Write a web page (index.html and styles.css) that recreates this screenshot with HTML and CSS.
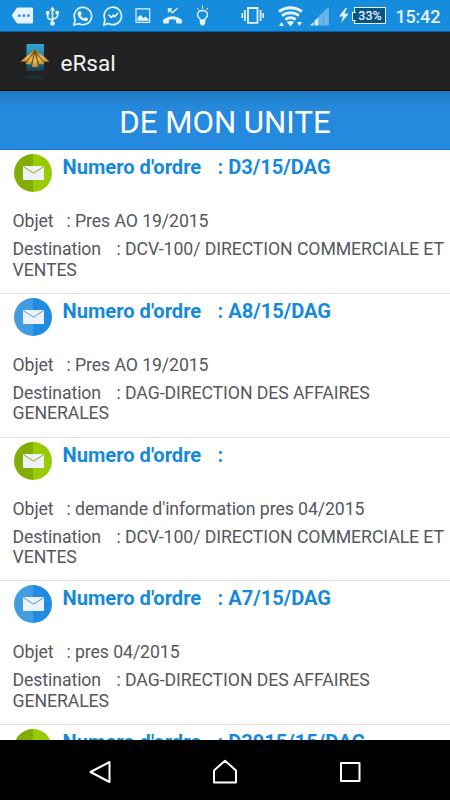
FILE: index.html
```html
<!DOCTYPE html>
<html lang="fr">
<head>
<meta charset="utf-8">
<title>eRsal</title>
<link rel="stylesheet" href="styles.css">
</head>
<body>
<svg class="defs" width="0" height="0">
  <symbol id="mail" viewBox="0 0 38 38">
    <path d="M19 0a19 19 0 0 0 0 38z" fill="var(--left)"/>
    <path d="M19 0a19 19 0 0 1 0 38z" fill="var(--right)"/>
    <path d="M9 12h21v14H9z" fill="#edf2fa"/>
    <path d="M9.300 12.600l10.200 6.500 10.200-6.500" fill="none" stroke="var(--left)" stroke-width="1"/>
  </symbol>
</svg>
<div class="screen">
  <header class="status">
    <div class="status-icons">
      <svg width="22" height="31" viewBox="12 0 22 31"><path d="M18 7.500h14q1 0 1 1v14q0 1-1 1H18q-1 0-1.600-1L12.300 16.500q-.6-1 0-2L16.400 8.500q.6-1 1.600-1z" fill="#e6f3fc"/><path d="M18 14.500h2.500v2.200H18zm4.600 0h2.500v2.200h-2.500zm4.600 0h2.500v2.200h-2.500z" fill="#168ddc"/></svg>
      <svg width="14" height="31" viewBox="46 0 14 31"><g fill="none" stroke="#e6f3fc" stroke-width="1.700"><path d="M52.500 9v14M47.700 13v4q0 2 4.800 3M57.500 12.500V16q0 2-5 3"/></g><path d="M52.500 6.500l2.700 4h-5.400zM46 11h3.500v3.500H46zm9.500 0H59v3h-3.500z" fill="#e6f3fc"/><circle cx="52.500" cy="23.500" r="2.300" fill="#e6f3fc"/></svg>
      <svg width="20" height="31" viewBox="73 0 20 31"><path d="M73.800 25l1.400-5a8.700 8.700 0 1 1 3.500 3.600z" fill="none" stroke="#e6f3fc" stroke-width="1.700"/><path d="M78.500 11.500l1.700-.7 1.600 3-1.100 1.500q1.100 2.200 3.300 3.200l1.300-1.300 2.800 1.400q0 2.500-2.600 2.600-6.700-1.100-8-7.200-.1-1.500 1-2.500z" fill="#e6f3fc"/></svg>
      <svg width="20" height="31" viewBox="103 0 20 31"><path d="M104 25l.9-5.500a8.700 8.700 0 1 1 3.500 3.900z" fill="none" stroke="#e6f3fc" stroke-width="1.700"/><path d="M108.500 14.500l2.800 3 2-2.200 1.400 1.300 3.300-3.600" fill="none" stroke="#e6f3fc" stroke-width="1.700"/></svg>
      <svg width="16" height="31" viewBox="134.500 0 16 31"><path d="M135.500 8.800h13.700v13.600h-13.700z" fill="none" stroke="#e6f3fc" stroke-width="1.200"/><path d="M137 20.800v-3.300l3-2.500 3 3 2-1.500 3 2.500v1.800z" fill="#e6f3fc"/></svg>
      <svg width="20" height="31" viewBox="163 0 20 31"><path d="M163 22.500v-2.500q9.500-7.500 19 0v2.500q0 1-1 1h-4.500l-.8-3.700q-3.200-1-6.400 0l-.8 3.700h-4.500q-1 0-1-1z" fill="#e6f3fc"/><path d="M168.500 12.500V9H172M169 9.300l3.500 3.500 5-4.700" fill="none" stroke="#e6f3fc" stroke-width="1.400"/></svg>
      <svg width="13" height="31" viewBox="196 0 13 31"><path d="M200.300 20l-.8-1.700q-2.300-1.800-2-4.100.8-3.600 5-3.700 4.200.1 5 3.700.3 2.300-2 4.100l-.8 1.700z" fill="none" stroke="#e6f3fc" stroke-width="1.400"/><path d="M199.800 20h5.400v3.500l-1.700 2h-2l-1.700-2zM202 5.500h1V9h-1z" fill="#e6f3fc"/><path d="M197 8l2 2m9-2l-2 2" stroke="#e6f3fc"/></svg>
      <svg width="24" height="31" viewBox="240.500 0 24 31"><path d="M247.500 8h9.500v14.800h-9.500z" fill="none" stroke="#e6f3fc" stroke-width="1.800"/><path d="M244.400 10v11m-2.600-8v5m18.300-8v11m2.600-8v5" stroke="#e6f3fc" stroke-width="1.700"/></svg>
      <svg width="26" height="31" viewBox="278 0 26 31"><g fill="none" stroke="#e6f3fc" stroke-width="2.900"><path d="M279 11.500q11.500-7.500 23 0M282 15.500q8.500-5.500 17 0M285.300 19.500q5.200-3.500 10.400 0"/></g><path d="M286.800 22q3.700-2.200 7.400 0l-3.700 4.500zM279 26l2.500-4 2.500 4zm18-4h5l-2.500 4z" fill="#e6f3fc"/></svg>
      <svg width="20" height="31" viewBox="310 0 20 31"><path d="M310 25.500l3.500-3.500v3.500zm4.500-4.500l4-4v8.500h-4z" fill="#e6f3fc"/><path d="M319 16l4.500-4.500v14H319zm4.800-4.800l5-4.200v18.500h-5z" fill="#69b5e9"/></svg>
      <svg width="10" height="31" viewBox="339 0 10 31"><path d="M345.500 8l-6.500 8.500h4L341 23l7.700-9.300h-4.200L347 8z" fill="#e6f3fc"/></svg>
      <div class="battery">33%</div>
    </div>
    <time class="clock">15:42</time>
  </header>
  <div class="appbar">
    <svg class="logo" width="30" height="40" viewBox="0 0 30 40">
      <defs>
        <linearGradient id="sky" x1="0" y1="0" x2="0" y2="1"><stop offset="0" stop-color="#32a5d2"/><stop offset=".5" stop-color="#2580a5"/><stop offset="1" stop-color="#183c4b"/></linearGradient>
        <linearGradient id="gold" x1="0" y1="0" x2="0" y2="1"><stop offset="0" stop-color="#8d6425"/><stop offset=".6" stop-color="#efb94b"/><stop offset="1" stop-color="#c18a2d"/></linearGradient>
      </defs>
      <path d="M6.500 3h17.500v27H6.500z" fill="url(#sky)"/>
      <path d="M15 8L.5 20.500l5.500.3L15 10l9 10.800 5.500-.3z" fill="url(#gold)"/>
      <path d="M14.500 9L5.500 23l5.500.5 4-13 4 13 5.500-.5L15.500 9z" fill="url(#gold)"/>
      <path d="M14.500 9L12 26h6L15.500 9z" fill="url(#gold)"/>
      <path d="M15 10L6.500 20.800M15 10l-3.500 13.500M15 10l3.500 13.500M15 10l8.500 10.800" stroke="#513d20" stroke-width=".8"/>
      <text x="7" y="37.500" class="logo-text">eRSAL</text>
    </svg>
    <h1>eRsal</h1>
  </div>
  <h2 class="title">DE MON UNITE</h2>
  <main class="list">
    <article class="row green">
      <div class="head"><svg class="mail"><use href="#mail"/></svg><h3><span>Numero d'ordre</span>: D3/15/DAG</h3></div>
      <p class="subject"><span>Objet</span>: Pres AO 19/2015</p>
      <p class="dest"><span>Destination</span>: DCV-100/ DIRECTION COMMERCIALE ET VENTES</p>
    </article>
    <article class="row blue">
      <div class="head"><svg class="mail"><use href="#mail"/></svg><h3><span>Numero d'ordre</span>: A8/15/DAG</h3></div>
      <p class="subject"><span>Objet</span>: Pres AO 19/2015</p>
      <p class="dest"><span>Destination</span>: DAG-DIRECTION DES AFFAIRES GENERALES</p>
    </article>
    <article class="row green">
      <div class="head"><svg class="mail"><use href="#mail"/></svg><h3><span>Numero d'ordre</span>:</h3></div>
      <p class="subject"><span>Objet</span>: demande d'information pres 04/2015</p>
      <p class="dest"><span>Destination</span>: DCV-100/ DIRECTION COMMERCIALE ET VENTES</p>
    </article>
    <article class="row blue">
      <div class="head"><svg class="mail"><use href="#mail"/></svg><h3><span>Numero d'ordre</span>: A7/15/DAG</h3></div>
      <p class="subject"><span>Objet</span>: pres 04/2015</p>
      <p class="dest"><span>Destination</span>: DAG-DIRECTION DES AFFAIRES GENERALES</p>
    </article>
    <article class="row green">
      <div class="head"><svg class="mail"><use href="#mail"/></svg><h3><span>Numero d'ordre</span>: D3915/15/DAG</h3></div>
    </article>
  </main>
  <nav class="nav">
    <svg width="24" height="26" viewBox="0 0 24 26"><path d="M21.500 3v20L2.500 13z"/></svg>
    <svg width="26" height="26" viewBox="0 0 26 26"><path d="M2 23.500V11.500L13 1.700 24 11.500v12z"/></svg>
    <svg width="24" height="26" viewBox="0 0 24 26"><path d="M3 4h18.500v18H3z"/></svg>
  </nav>
</div>
</body>
</html>
```

FILE: styles.css
```css
* { box-sizing: border-box; }
body { margin: 0; font-family: Roboto, sans-serif; background: #fff; }
h1, h2, h3, p { margin: 0; font-weight: 400; }
svg { display: block; flex: none; }
.defs { display: none; }
.screen { display: flex; flex-direction: column; width: 450px; height: 800px; overflow: hidden; }

.status { flex: none; display: flex; height: 32px; padding-left: 12px; background: #168ddc; border-bottom: 1px solid #0d5fa5; color: #e6f3fc; }
.status-icons { display: flex; }
.status-icons svg + svg { margin-left: 12px; }
.status-icons svg:nth-child(3) { margin-left: 13px; }
.status-icons svg:nth-child(4) { margin-left: 10px; }
.status-icons svg:nth-child(5) { margin-left: 11.5px; }
.status-icons svg:nth-child(6) { margin-left: 12.5px; }
.status-icons svg:nth-child(7) { margin-left: 13px; }
.status-icons svg:nth-child(8) { margin-left: 31.5px; }
.status-icons svg:nth-child(9) { margin-left: 13.5px; }
.status-icons svg:nth-child(10) { margin-left: 6px; }
.status-icons svg:nth-child(11) { margin-left: 9px; }
.battery { position: relative; width: 32px; height: 17px; margin: 7px 0 0 5px; border: 1px solid #e6f3fc; background: #085487; font-size: 12.5px; line-height: 16px; font-weight: 500; text-align: center; }
.battery::before { content: ""; position: absolute; left: -3px; top: 4px; width: 3px; height: 7px; border: 1px solid #e6f3fc; border-right: 0; background: #085487; }
.clock { margin-left: 9.500px; font-size: 18px; font-weight: 500; line-height: 33px; letter-spacing: -.2px; }

.appbar { flex: none; display: flex; align-items: center; height: 59px; padding-left: 20px; background: #222; border-bottom: 1px solid #100303; color: #f3f3f3; }
.logo { margin-top: 0; }
.logo-text { font: 6px Roboto, sans-serif; fill: #203f4b; }
.appbar h1 { margin: 3px 0 0 10.500px; font-size: 22.5px; line-height: 26px; }

.title { flex: none; height: 59px; padding-top: 3px; border-bottom: 1px solid #0878d6; background: linear-gradient(#2079c3, #258add 18px); color: #fff; font-size: 31.2px; line-height: 58px; text-align: center; }

.list { flex: 1; min-height: 0; overflow: hidden; }
.row { height: 143.75px; border-bottom: 1px solid #ddd; color: #55585d; font-size: 17.7px; line-height: 20.6px; letter-spacing: -.09px; }
.green { --left: #82ad00; --right: #99cc00; }
.blue { --left: #439be0; --right: #208be0; }
.head { display: flex; height: 61px; padding: 4px 0 0 14px; }
.mail { width: 38px; height: 38px; }
.head h3 { margin-left: 10.500px; color: #168ada; font-size: 20.1px; font-weight: 700; line-height: 26px; letter-spacing: 0; }
.head span { display: inline-block; width: 155px; }
.subject { padding: 0 4px 0 12.500px; }
.dest { padding: 7.500px 4px 0 12.500px; }
.subject span { display: inline-block; width: 54px; }
.dest span { display: inline-block; width: 104px; }

.nav { flex: none; display: flex; justify-content: space-between; height: 60px; padding: 19px 88px 0; background: #000; }
.nav path { fill: none; stroke: #fff; stroke-width: 2; stroke-linejoin: round; }
```
